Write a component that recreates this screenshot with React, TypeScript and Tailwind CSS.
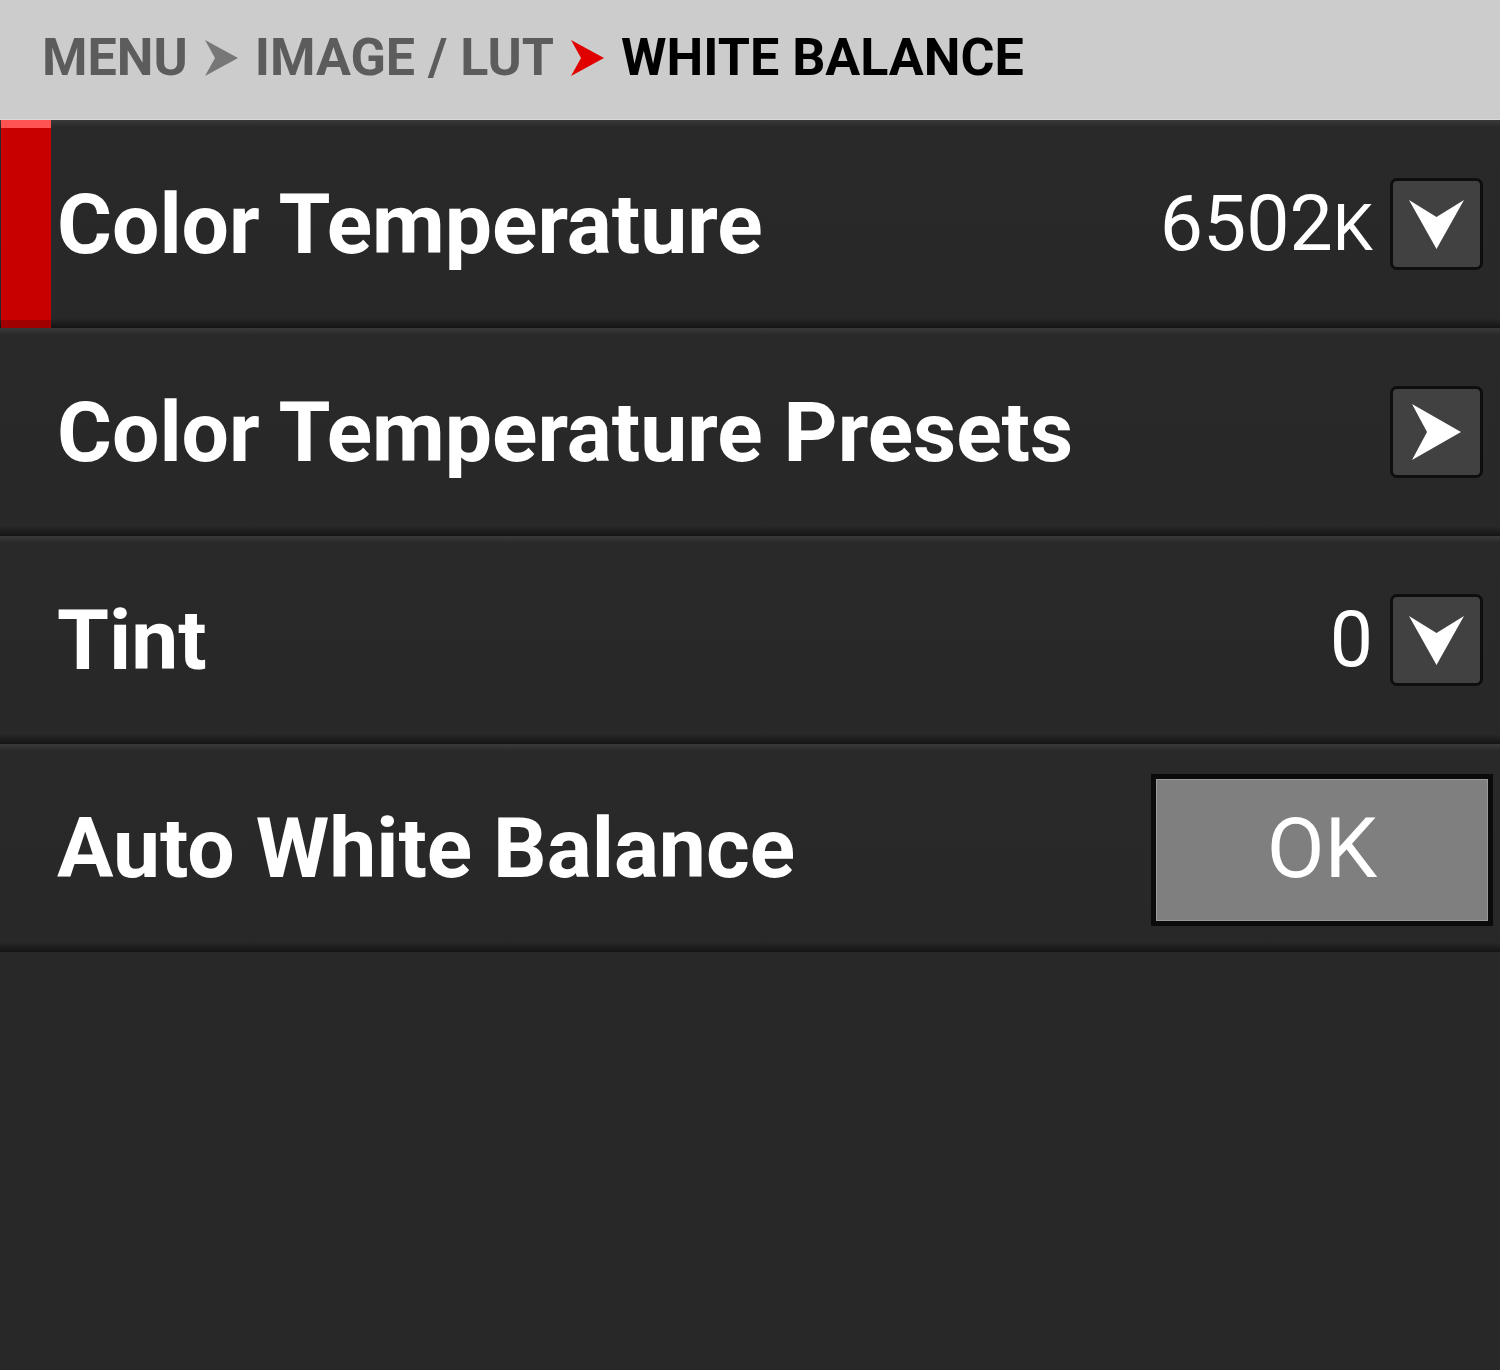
import React from "react";

const DownArrow = () => (
  <svg width="55" height="49" viewBox="0 0 55 49">
    <polygon points="0,0 27.5,49 55,0 27.5,17" fill="#ffffff" />
  </svg>
);

const RightArrow = () => (
  <svg width="49" height="56" viewBox="0 0 49 56">
    <polygon points="0,0 49,28 0,56 15,28" fill="#ffffff" />
  </svg>
);

const Crumb = ({ color }: { color: string }) => (
  <svg width="33" height="36" viewBox="0 0 33 36">
    <polygon points="0,0 33,18 0,36 10,18" fill={color} />
  </svg>
);

const IconButton = ({ children }: { children: React.ReactNode }) => (
  <div className="flex h-[92px] w-[93px] items-center justify-center rounded-[7px] border-[3px] border-[#0e0e0e] bg-[#414141]">
    {children}
  </div>
);

interface RowProps {
  label: string;
  selected?: boolean;
  children?: React.ReactNode;
}

const Row = ({ label, selected, children }: RowProps) => (
  <div className="relative flex h-[208px] items-center justify-between bg-[linear-gradient(to_bottom,#3a3a3a_0px,#292929_7px,#282828_198px,#141414_208px)] pl-[57px] pr-[17px]">
    {selected && (
      <div className="absolute bottom-0 left-[1px] top-0 flex w-[50px] flex-col">
        <div className="h-[8px] bg-[#ff5252]" />
        <div className="flex-1 bg-[#c80000]" />
        <div className="h-[8px] bg-[#a10000]" />
      </div>
    )}
    <span className="pt-[2px] text-[84px] font-bold leading-none text-white">{label}</span>
    {children}
  </div>
);

export default function App() {
  return (
    <div className="flex h-[1370px] w-[1500px] flex-col bg-[#282828] font-['Roboto',sans-serif]">
      {/* breadcrumb */}
      <div className="flex h-[120px] items-center gap-[17px] border-b border-[#dadada] bg-[#cccccc] pb-[4px] pl-[42px] text-[52px] font-bold leading-none">
        <span className="text-[#5c5c5c]">MENU</span>
        <Crumb color="#777777" />
        <span className="text-[#5c5c5c]">IMAGE / LUT</span>
        <Crumb color="#e00000" />
        <span className="text-black">WHITE BALANCE</span>
      </div>

      <Row label="Color Temperature" selected>
        <div className="flex items-center gap-[17px]">
          <span className="flex items-baseline font-normal leading-none text-white">
            <span className="text-[77px]">6502</span>
            <span className="text-[64px]">K</span>
          </span>
          <IconButton>
            <DownArrow />
          </IconButton>
        </div>
      </Row>

      <Row label="Color Temperature Presets">
        <IconButton>
          <RightArrow />
        </IconButton>
      </Row>

      <Row label="Tint">
        <div className="flex items-center gap-[17px]">
          <span className="text-[77px] font-normal leading-none text-white">0</span>
          <IconButton>
            <DownArrow />
          </IconButton>
        </div>
      </Row>

      <Row label="Auto White Balance">
        <div className="-mr-[10px] mt-[3px] flex h-[152px] w-[342px] bg-[#0b0b0b] p-[5px]">
          <div className="flex flex-1 items-center justify-center border border-[#9a9a9a] bg-[#7f7f7f] pb-[2px] text-[84px] font-normal leading-none text-white">
            OK
          </div>
        </div>
      </Row>
    </div>
  );
}
